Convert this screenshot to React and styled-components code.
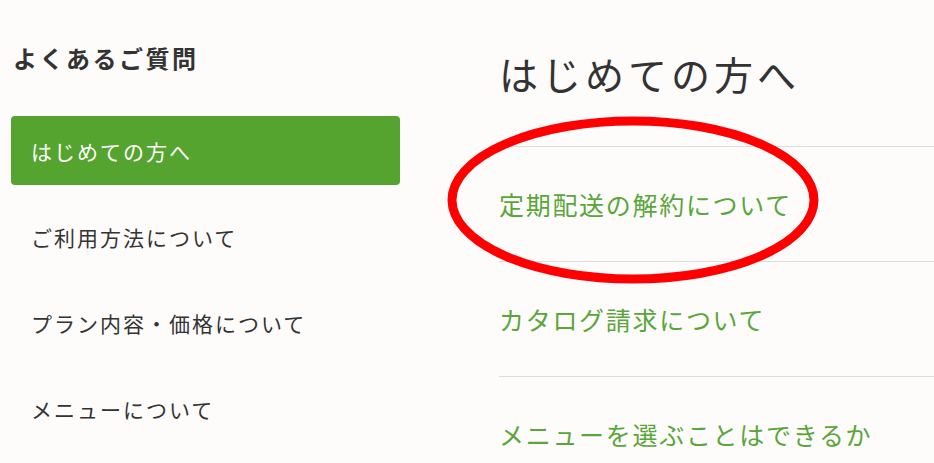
import React from "react";
import styled, { createGlobalStyle } from "styled-components";

const Global = createGlobalStyle`
  html, body { margin: 0; padding: 0; background: #fdfcfb; }
  body { font-family: "Noto Sans CJK JP", "Noto Sans", sans-serif; overflow: hidden; }
`;

const Page = styled.div`
  position: relative;
  width: 934px;
  height: 463px;
  display: flex;
  align-items: flex-start;
  overflow: hidden;
  background: #fdfcfb;
`;

const Sidebar = styled.nav`
  width: 389px;
  flex: none;
  padding: 41px 0 0 11px;
  display: flex;
  flex-direction: column;
`;

const SideTitle = styled.h2`
  margin: 0 0 0 2px;
  font-size: 24px;
  line-height: 34px;
  font-weight: 700;
  letter-spacing: 2.5px;
  color: #333;
`;

const SideItem = styled.div`
  flex: none;
  height: 69px;
  box-sizing: border-box;
  padding-left: 20px;
  display: flex;
  align-items: center;
  border-radius: 4px;
  font-size: 21px;
  letter-spacing: 2px;
  margin-top: ${(p) => (p.$first ? "41px" : "17px")};
  background: ${(p) => (p.$active ? "#54a42f" : "transparent")};
  color: ${(p) => (p.$active ? "#ffffff" : "#333")};
`;

const Main = styled.main`
  flex: 1;
  margin-left: 99px;
  padding-top: 48px;
  display: flex;
  flex-direction: column;
`;

const Heading = styled.h1`
  flex: none;
  margin: 0;
  font-size: 39px;
  line-height: 50px;
  font-weight: 400;
  letter-spacing: 4px;
  color: #333;
  padding-bottom: 48px;
  border-bottom: 1px solid #dcdcdc;
`;

const Question = styled.a`
  flex: none;
  display: flex;
  align-items: center;
  height: 114px;
  border-bottom: 1px solid #dcdcdc;
  font-size: 25px;
  letter-spacing: 1.7px;
  color: #5aa63a;
  text-decoration: none;
`;

const Annotation = styled.svg`
  position: absolute;
  left: 440px;
  top: 110px;
  pointer-events: none;
`;

const sideItems = ["ご利用方法について", "プラン内容・価格について", "メニューについて"];
const questions = ["定期配送の解約について", "カタログ請求について", "メニューを選ぶことはできるか"];

export default function App() {
  return (
    <Page>
      <Global />
      <Sidebar>
        <SideTitle>よくあるご質問</SideTitle>
        <SideItem $active $first>はじめての方へ</SideItem>
        {sideItems.map((t) => (
          <SideItem key={t}>{t}</SideItem>
        ))}
      </Sidebar>
      <Main>
        <Heading>はじめての方へ</Heading>
        {questions.map((q) => (
          <Question key={q} href="#">{q}</Question>
        ))}
      </Main>
      <Annotation width="390" height="180" viewBox="0 0 390 180">
        <ellipse cx="193" cy="90" rx="181" ry="79" fill="none" stroke="#ff0000" strokeWidth="9" />
      </Annotation>
    </Page>
  );
}
